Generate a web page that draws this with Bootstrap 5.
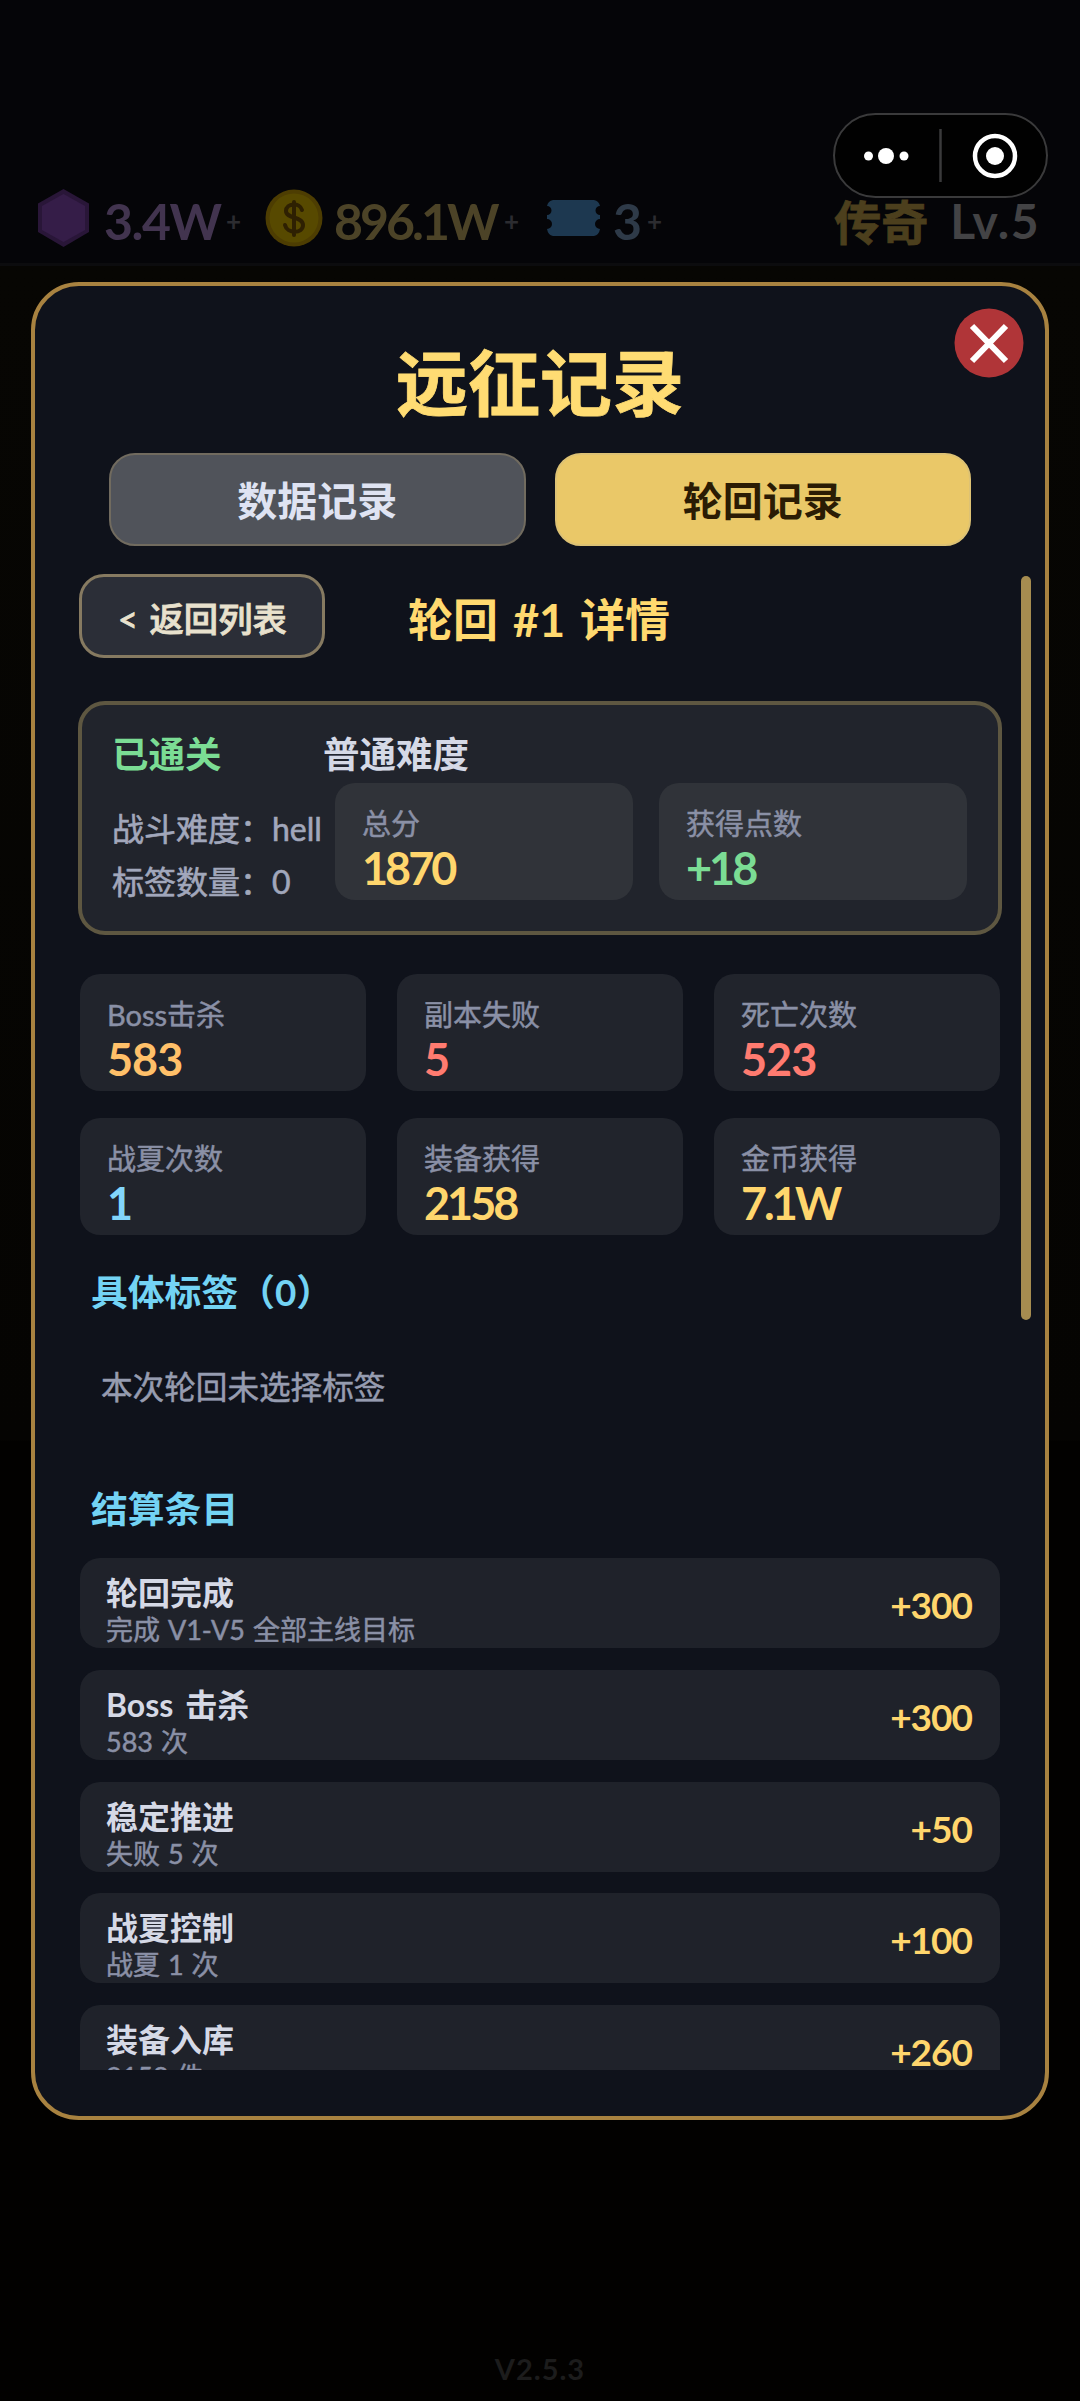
<!DOCTYPE html>
<html lang="zh-CN">
<head>
<meta charset="utf-8">
<meta name="viewport" content="width=device-width, initial-scale=1">
<title>远征记录</title>
<link href="https://cdn.jsdelivr.net/npm/bootstrap@5.3.0/dist/css/bootstrap.min.css" rel="stylesheet">
<style>
html,body{height:100%}
body{font-family:Lato,"Noto Sans CJK SC",sans-serif;background:#020100;color:#d5d9e6;overflow:hidden;white-space:nowrap}
.screen{height:2401px;background:linear-gradient(#070603 265px,#050402 1440px,#020100 1441px)}
.topbar{height:266px;background:#050508;border-bottom:3px solid #0c0c0e;padding:189px 40px 0 38px;font-weight:700;font-size:50px;line-height:64px}
.topbar svg{display:block;flex:none}
.topbar .amt{height:64px}
.topbar .plus{font-size:26px;color:#2c2c30;line-height:64px}
.rank{color:#4c3f1d;font-size:47px;line-height:66px;-webkit-text-stroke:.8px}
.level{color:#434345;font-size:48px;margin-left:22px;letter-spacing:1.5px}
.capsule{left:833px;top:113px;width:215px;height:85px;border:2px solid #3a3a3b;border-radius:43px;background:#010101}
.panel{margin:16px 31px 0;height:1838px;border:4px solid #a88240;border-radius:48px;background:#0f121b;padding:0 45px}
.ttl{font-size:72px;line-height:100px;height:152px;padding-top:46px;color:#ffdc73;font-weight:700;-webkit-text-stroke:.8px}
.closebtn{left:954px;top:308px;width:70px;height:70px}
.tabs{gap:29px;margin:15px 29px 0;height:93px}
.tabs button{flex:1 1 0;border-radius:26px;font-size:40px;font-weight:700;line-height:93px;border:2.5px solid #716b5f;padding:0;background:#50535a;color:#dfe3f2}
.tabs button.on{background:#eac868;color:#2b1c04;border-color:#ddc274}
.subhead{margin-top:28px;height:84px;padding-left:1px}
.back{width:246px;height:84px;border:3px solid #867a61;border-radius:25px;background:#2b2e37;color:#e8e1cd;font-size:34.3px;font-weight:500;line-height:84px;padding:0 0 0 36px;text-align:left;word-spacing:3px;-webkit-text-stroke:.8px}
.dt{font-size:45px;font-weight:700;color:#ffd96f;line-height:92px;margin-left:83px;word-spacing:4px}
.scroller{height:1524px;overflow:hidden;margin:0 -2px}
.sumbox{margin-top:43px;height:234px;border:4px solid #5e5741;border-radius:27px;background:#21242c;padding:0 30px}
.sumhead{padding-top:24px;height:78px;font-size:36.5px;font-weight:700;line-height:50px}
.sumhead .s1{width:211px;color:#7bdc94}
.meta{width:223px;font-size:32px;line-height:53px;color:#a1a7bb;padding-top:19px;-webkit-text-stroke:.6px}
.tile{height:117px;border-radius:20px;background:#21242c;padding:19px 27px 0}
.sumbox .tile{background:#303339}
.w-score{width:298px}.w-point{width:308px;margin-left:26px}
.lab{font-size:29px;line-height:44px;color:#8a90a6;-webkit-text-stroke:.5px}
.val{font-size:45px;font-weight:700;line-height:44px;letter-spacing:-1px}
.tight{letter-spacing:-3px}
.gold{color:#ffd66d}.green{color:#7bdc94}.orange{color:#ffc069}.red{color:#ff7b70}.blue{color:#82d5fa}
.stats{display:grid;grid-template-columns:repeat(3,286px);column-gap:31px;row-gap:27px;margin:39px 2px 0}
.sect{font-size:36.8px;font-weight:700;line-height:50px;color:#73d3f4;padding-left:13px}
.tags-h{margin:32px 0 0}.items-h{margin:74px 0 24px}
.note{font-size:31.6px;line-height:46px;color:#969cb0;padding-left:23px;margin-top:47px;-webkit-text-stroke:.5px}
.entry{height:90px;margin:0 2px 21.8px 2px;border-radius:20px;background:#1f222a;padding:13px 28px 0 26px}
.entry .n{font-size:32px;font-weight:700;line-height:44px;color:#d5d9e6;height:40px;word-spacing:4px}
.entry .d{font-size:27px;line-height:38px;color:#8a90a6;word-spacing:1px;-webkit-text-stroke:.5px}
.entry .p{font-size:37px;font-weight:700;line-height:68px;color:#ffd66d;letter-spacing:-1px}
.bar{left:1021px;top:576px;width:10px;height:744px;border-radius:5px;background:#a68c50}
.ver{margin-top:219px;font-size:29px;line-height:60px;color:#1c1c1c;font-weight:700;letter-spacing:1px}
</style>
<script src="https://cdn.jsdelivr.net/npm/bootstrap@5.3.0/dist/js/bootstrap.bundle.min.js"></script>
</head>
<body>
<div class="screen position-relative">
  <header class="topbar d-flex align-items-start">
    <svg width="51" height="58" viewBox="0 0 51 58"><path d="M25.500 0 51 14.500V43L25.500 58 0 43V14.500Z" fill="#291638"/><path d="M25.500 5 47 17V41L25.500 53 4 41V17Z" fill="#351d48"/></svg>
    <span class="amt" style="width:137px;padding-left:15px;color:#42344f;letter-spacing:-1.5px">3.4W</span><span class="plus" style="width:39px">+</span>
    <svg width="58" height="58" viewBox="0 0 58 58"><circle cx="29" cy="29" r="28.500" fill="#4d3d02"/><circle cx="29" cy="29" r="24.500" fill="#574900"/><path d="M37 21C35 13 21 14 21 22C21 30 38 27 38 36C38 45 22 45 20 36M29 13V46" fill="none" stroke="#2e2002" stroke-width="4" stroke-linecap="round"/></svg>
    <span class="amt" style="width:181px;padding-left:11px;color:#4c4327;letter-spacing:-3px">896.1W</span><span class="plus" style="width:43px">+</span>
    <svg width="53" height="58" viewBox="0 0 53 58"><path d="M6 11H47Q52 12 53 17A4.500 4.500 0 0 0 53 26V30A4.500 4.500 0 0 0 53 40Q52 46 47 47H6Q1 46 0 40A4.500 4.500 0 0 0 0 30V26A4.500 4.500 0 0 0 0 17Q1 12 6 11Z" fill="#1d3850"/></svg>
    <span class="amt" style="width:47px;padding-left:13px;color:#2e3a48">3</span><span class="plus">+</span>
    <span class="rank ms-auto">传奇</span><span class="level">Lv.5</span>
  </header>

  <main class="panel">
    <h1 class="ttl text-center mb-0">远征记录</h1>
    <div class="tabs d-flex">
      <button type="button">数据记录</button>
      <button type="button" class="on">轮回记录</button>
    </div>
    <div class="scroller">
      <div class="subhead d-flex">
        <button type="button" class="back">&lt; 返回列表</button>
        <div class="dt">轮回 #1 详情</div>
      </div>
      <section class="sumbox">
        <div class="sumhead d-flex"><span class="s1">已通关</span><span>普通难度</span></div>
        <div class="d-flex">
          <div class="meta">战斗难度：hell<br>标签数量：0</div>
          <div class="tile w-score"><div class="lab">总分</div><div class="val gold tight">1870</div></div>
          <div class="tile w-point"><div class="lab">获得点数</div><div class="val green tight">+18</div></div>
        </div>
      </section>
      <section class="stats">
        <div class="tile"><div class="lab">Boss击杀</div><div class="val orange">583</div></div>
        <div class="tile"><div class="lab">副本失败</div><div class="val red">5</div></div>
        <div class="tile"><div class="lab">死亡次数</div><div class="val red">523</div></div>
        <div class="tile"><div class="lab">战夏次数</div><div class="val blue">1</div></div>
        <div class="tile"><div class="lab">装备获得</div><div class="val gold tight">2158</div></div>
        <div class="tile"><div class="lab">金币获得</div><div class="val gold tight">7.1W</div></div>
      </section>
      <h2 class="sect tags-h">具体标签（0）</h2>
      <p class="note mb-0">本次轮回未选择标签</p>
      <h2 class="sect items-h">结算条目</h2>
      <div class="entry d-flex justify-content-between"><div><div class="n">轮回完成</div><div class="d">完成 V1-V5 全部主线目标</div></div><div class="p">+300</div></div>
      <div class="entry d-flex justify-content-between"><div><div class="n">Boss 击杀</div><div class="d">583 次</div></div><div class="p">+300</div></div>
      <div class="entry d-flex justify-content-between"><div><div class="n">稳定推进</div><div class="d">失败 5 次</div></div><div class="p">+50</div></div>
      <div class="entry d-flex justify-content-between"><div><div class="n">战夏控制</div><div class="d">战夏 1 次</div></div><div class="p">+100</div></div>
      <div class="entry d-flex justify-content-between"><div><div class="n">装备入库</div><div class="d">2158 件</div></div><div class="p">+260</div></div>
    </div>
  </main>
  <footer class="ver text-center">V2.5.3</footer>

  <div class="bar position-absolute"></div>
  <svg class="closebtn position-absolute" viewBox="0 0 70 70"><circle cx="35" cy="35" r="34.500" fill="#b03538"/><path d="M18 18 52 53M52 18 18 53" stroke="#fff" stroke-width="6"/></svg>
  <div class="capsule position-absolute">
    <svg class="d-block" width="211" height="81" viewBox="0 0 211 81"><g fill="#fff"><circle cx="33.500" cy="41" r="4.500"/><circle cx="51" cy="41" r="8"/><circle cx="69" cy="41" r="4.500"/><circle cx="160" cy="41" r="9"/></g><circle cx="160" cy="41" r="20" fill="none" stroke="#fff" stroke-width="4.500"/><path d="M105.500 14V67" stroke="#3a3a3b" stroke-width="2.500"/></svg>
  </div>
</div>
</body>
</html>
